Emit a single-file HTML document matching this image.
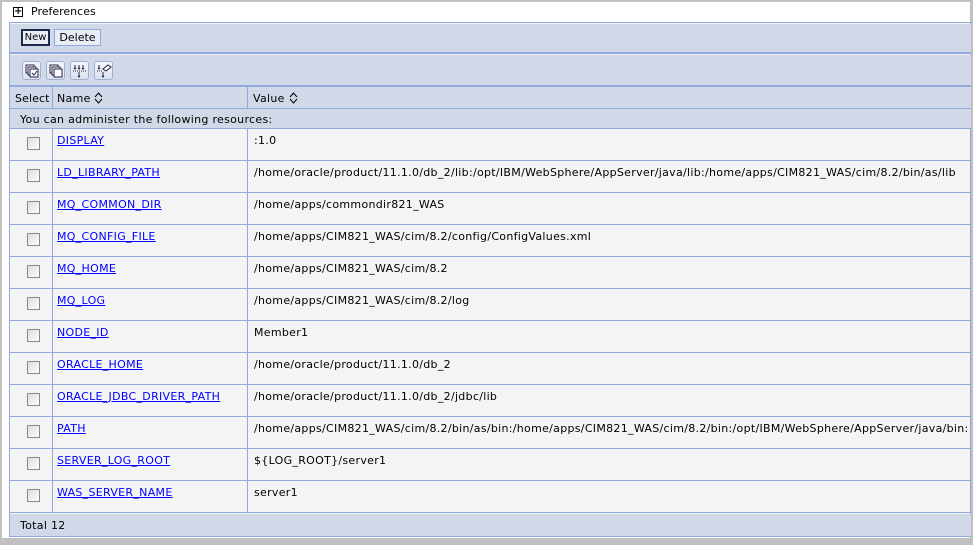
<!DOCTYPE html><html><head><style>
*{margin:0;padding:0;box-sizing:border-box}
body{width:973px;height:545px;background:#fff;font-family:"DejaVu Sans",Verdana,sans-serif;font-size:11px;letter-spacing:0.3px;color:#000;position:relative;overflow:hidden}
.a{position:absolute}
.hb{background:#d1d8e7}
.ln{background:#8faadc}
a{color:#00f;text-decoration:underline}
.cb{position:absolute;width:13px;height:13px;border:1px solid #8a8a8a;background:linear-gradient(135deg,#dcdcdc,#fff)}
.btn{position:absolute;top:29px;height:17px;border:1px solid #8faadc;background:#e8edf6;font-size:11px;line-height:15px;letter-spacing:0;text-align:center}
.ic{position:absolute;top:61px;width:19px;height:19px;border:1px solid #9fb1d3;border-radius:3px;background:linear-gradient(#f4f6fa,#dce3ef)}
</style></head><body>
<div class="a" style="left:0;top:0;width:973px;height:2px;background:#c0c0c0"></div>
<div class="a" style="left:0;top:0;width:2px;height:545px;background:#c0c0c0"></div>
<div class="a" style="left:970px;top:0;width:3px;height:545px;background:#c0c0c0"></div>
<div class="a" style="left:0;top:538px;width:973px;height:7px;background:#c0c0c0"></div>
<div class="a" style="left:13px;top:7px;width:10px;height:10px;border:1px solid #000;font-size:10px;line-height:8px;text-align:center;font-weight:bold;letter-spacing:0">+</div>
<div class="a" style="left:31px;top:5px;font-size:11px;letter-spacing:0">Preferences</div>
<div class="a" style="left:9px;top:22px;width:962px;height:515px;background:#f4f4f4;border:1px solid #8faadc"></div>
<div class="a hb" style="left:10px;top:24px;width:961px;height:28px"></div>
<div class="a ln" style="left:10px;top:52px;width:961px;height:2px"></div>
<div class="a hb" style="left:10px;top:55px;width:961px;height:30px"></div>
<div class="a ln" style="left:10px;top:85px;width:961px;height:2px"></div>
<div class="btn" style="left:21px;width:29px;border:2px solid #1a2a4a;line-height:13px;font-size:10px">New</div>
<div class="btn" style="left:54px;width:47px">Delete</div>
<div class="ic" style="left:22px"><svg width="17" height="17"><rect x="3" y="3" width="8" height="8" fill="#fff" stroke="#224"/><rect x="5" y="5" width="8" height="8" fill="#fff" stroke="#224"/><rect x="7" y="7" width="8" height="8" fill="#fff" stroke="#224"/><path d="M9 11l2 2 3-4" stroke="#224" fill="none"/></svg></div>
<div class="ic" style="left:46px"><svg width="17" height="17"><rect x="3" y="3" width="8" height="8" fill="#fff" stroke="#224"/><rect x="5" y="5" width="8" height="8" fill="#fff" stroke="#224"/><rect x="7" y="7" width="8" height="8" fill="#fff" stroke="#224"/></svg></div>
<div class="ic" style="left:70px"><svg width="17" height="17"><path d="M4 3v4M8 3v4M12 3v4M3 6l1 1 1-1M7 6l1 1 1-1M11 6l1 1 1-1M8 10v5M7 14l1 1 1-1" stroke="#224" fill="none"/><path d="M2 9h13" stroke="#224" stroke-dasharray="1 1"/></svg></div>
<div class="ic" style="left:94px"><svg width="17" height="17"><path d="M4 3v4M3 6l1 1 1-1M8 10v5M7 14l1 1 1-1" stroke="#224" fill="none"/><path d="M2 9h5" stroke="#224" stroke-dasharray="1 1"/><path d="M8 7l5-4 3 2-5 4z" fill="#fff" stroke="#224"/></svg></div>
<div class="a hb" style="left:10px;top:87px;width:961px;height:21px"></div>
<div class="a" style="left:52px;top:87px;width:1px;height:21px;background:#8faadc"></div>
<div class="a" style="left:247px;top:87px;width:1px;height:21px;background:#8faadc"></div>
<div class="a" style="left:15px;top:92px;letter-spacing:0.1px">Select</div>
<div class="a" style="left:57px;top:92px">Name <svg width="9" height="12" style="vertical-align:-2px"><path d="M1 5l3.5-4 3.5 4M1 7l3.5 4 3.5-4" stroke="#000" fill="none"/></svg></div>
<div class="a" style="left:253px;top:92px">Value <svg width="9" height="12" style="vertical-align:-2px"><path d="M1 5l3.5-4 3.5 4M1 7l3.5 4 3.5-4" stroke="#000" fill="none"/></svg></div>
<div class="a ln" style="left:10px;top:108px;width:961px;height:1px"></div>
<div class="a hb" style="left:10px;top:109px;width:961px;height:19px"></div>
<div class="a" style="left:20px;top:113px">You can administer the following resources:</div>
<div class="a ln" style="left:10px;top:128px;width:961px;height:1px"></div>
<div id="rows"></div>
<div class="a" style="left:52px;top:129px;width:1px;height:384px;background:#8faadc"></div>
<div class="a" style="left:247px;top:129px;width:1px;height:384px;background:#8faadc"></div>
<div class="a hb" style="left:10px;top:514px;width:961px;height:22px"></div>
<div class="a" style="left:20px;top:519px">Total 12</div>
<script>
var d=[["DISPLAY",":1.0"],["LD_LIBRARY_PATH","/home/oracle/product/11.1.0/db_2/lib:/opt/IBM/WebSphere/AppServer/java/lib:/home/apps/CIM821_WAS/cim/8.2/bin/as/lib"],["MQ_COMMON_DIR","/home/apps/commondir821_WAS"],["MQ_CONFIG_FILE","/home/apps/CIM821_WAS/cim/8.2/config/ConfigValues.xml"],["MQ_HOME","/home/apps/CIM821_WAS/cim/8.2"],["MQ_LOG","/home/apps/CIM821_WAS/cim/8.2/log"],["NODE_ID","Member1"],["ORACLE_HOME","/home/oracle/product/11.1.0/db_2"],["ORACLE_JDBC_DRIVER_PATH","/home/oracle/product/11.1.0/db_2/jdbc/lib"],["PATH","/home/apps/CIM821_WAS/cim/8.2/bin/as/bin:/home/apps/CIM821_WAS/cim/8.2/bin:/opt/IBM/WebSphere/AppServer/java/bin:"],["SERVER_LOG_ROOT","${LOG_ROOT}/server1"],["WAS_SERVER_NAME","server1"]];
var h="";d.forEach(function(r,i){var t=129+i*32;
h+='<div class="cb" style="left:27px;top:'+(t+8)+'px"></div><a class="a" href="#" style="left:57px;top:'+(t+5)+'px">'+r[0]+'</a><div class="a" style="left:254px;top:'+(t+5)+'px;white-space:nowrap">'+r[1]+'</div><div class="a ln" style="left:10px;top:'+(t+31)+'px;width:961px;height:1px"></div>';});
document.getElementById("rows").innerHTML=h;
</script>
</body></html>
